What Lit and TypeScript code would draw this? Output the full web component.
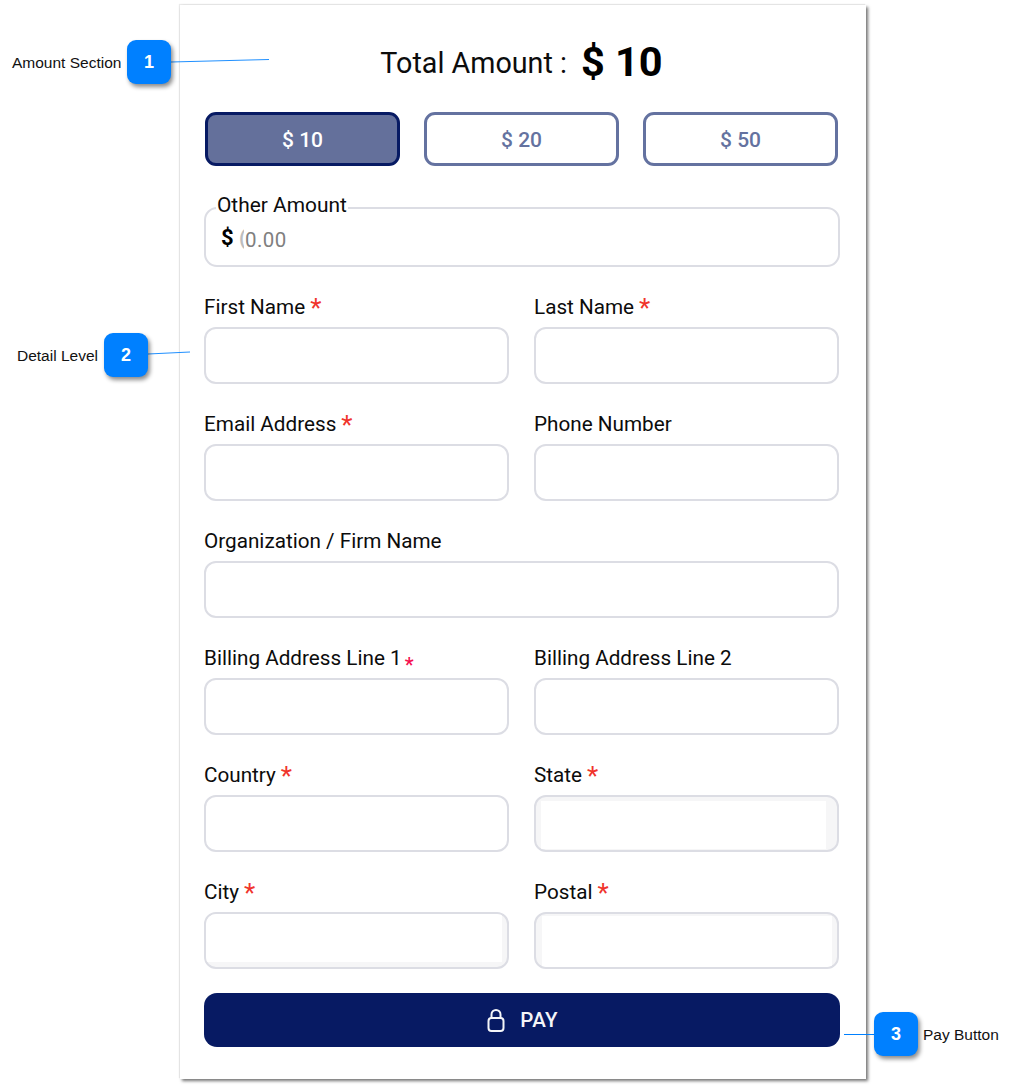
import { LitElement, html, css, svg } from "lit";
import { customElement } from "lit/decorators.js";

type Field = { label: string; star?: "normal" | "small"; inner?: string; span?: boolean };

const rows: Field[] = [
  { label: "First Name", star: "normal" },
  { label: "Last Name", star: "normal" },
  { label: "Email Address", star: "normal" },
  { label: "Phone Number" },
  { label: "Organization / Firm Name", span: true },
  { label: "Billing Address Line 1", star: "small" },
  { label: "Billing Address Line 2" },
  { label: "Country", star: "normal" },
  { label: "State", star: "normal", inner: "state" },
  { label: "City", star: "normal", inner: "city" },
  { label: "Postal", star: "normal", inner: "postal" },
];

@customElement("app-root")
export class AppRoot extends LitElement {
  static styles = css`
    :host {
      display: block;
      position: relative;
      width: 1014px;
      height: 1088px;
      overflow: hidden;
      background: #fff;
      font-family: Roboto, "Liberation Sans", sans-serif;
      color: #0c0c0c;
    }
    .card {
      box-sizing: border-box;
      width: 686px;
      height: 1074px;
      margin-left: 180px;
      position: relative;
      top: 5px;
      padding: 0 27px 0 24px;
      background: #fff;
      box-shadow: 2px 2px 3px rgba(0, 0, 0, 0.55), -1px -1px 1px rgba(0, 0, 0, 0.08);
    }
    .total {
      box-sizing: border-box;
      height: 107px;
      display: flex;
      align-items: center;
      justify-content: center;
      gap: 14px;
      font-size: 28.7px;
      padding: 8px 0 0 0;
    }
    .total b {
      font-size: 41.5px;
      font-weight: 700;
      color: #000;
      position: relative;
      top: -1px;
    }
    .amounts {
      display: flex;
      gap: 24px;
      padding-left: 1px;
    }
    .amount {
      box-sizing: border-box;
      width: 195px;
      height: 54px;
      border: 3px solid #6472a0;
      border-radius: 11px;
      display: flex;
      align-items: center;
      justify-content: center;
      padding-top: 2px;
      font-size: 21px;
      font-weight: 500;
      color: #6472a0;
      background: #fff;
    }
    .amount.on {
      background: #64709b;
      border-color: #071a63;
      color: #fff;
    }
    .other {
      box-sizing: border-box;
      position: relative;
      width: 636px;
      height: 60px;
      margin-top: 41px;
      border: 2px solid #dcdde4;
      border-radius: 13px;
      display: flex;
      align-items: center;
      padding: 0 0 0 16px;
      font-size: 20px;
    }
    .legend {
      position: absolute;
      left: 10px;
      top: -16px;
      padding: 0 1px;
      background: #fff;
      font-size: 20.9px;
      line-height: 24px;
      color: #0c0c0c;
    }
    .dollar {
      font-weight: 700;
      color: #000;
      width: 17px;
      position: relative;
      left: -1px;
      font-size: 22px;
    }
    .paren {
      width: 5px;
      overflow: hidden;
      color: #bdbdbd;
      font-size: 20px;
      font-weight: 700;
      position: relative;
      top: 1px;
    }
    .ph {
      color: #808080;
      font-size: 20.5px;
      letter-spacing: 0.4px;
      position: relative;
      top: 3px;
      left: 1px;
    }
    .grid {
      display: grid;
      grid-template-columns: 305px 305px;
      column-gap: 25px;
      row-gap: 25px;
      margin-top: 25px;
      width: 635px;
    }
    .field.span {
      grid-column: 1 / 3;
    }
    .label {
      box-sizing: border-box;
      height: 35px;
      padding-top: 1px;
      font-size: 20.7px;
      line-height: 28px;
      white-space: nowrap;
      display: flex;
    }
    .star {
      color: #f0342c;
      font-size: 26px;
      margin-left: 5px;
      line-height: 30px;
    }
    .star.small {
      color: #f5104f;
      font-size: 20px;
      margin-left: 3px;
      line-height: 42px;
      font-weight: 500;
    }
    .input {
      box-sizing: border-box;
      height: 57px;
      border: 2px solid #dcdde4;
      border-radius: 12px;
      background: #fff;
      display: flex;
      overflow: hidden;
    }
    .input.filled {
      background: #f6f6f7;
    }
    .inner {
      flex: 1;
      background: #fff;
    }
    .inner.state {
      margin: 4px 11px 1px 5px;
    }
    .inner.city {
      margin: 0 5px 5px 0;
    }
    .inner.postal {
      margin: 2px 5px 0 6px;
    }
    .pay {
      box-sizing: border-box;
      width: 636px;
      height: 54px;
      margin-top: 24px;
      padding-left: 1px;
      border-radius: 13px;
      background: #071a63;
      color: #f4f5f8;
      display: flex;
      align-items: center;
      justify-content: center;
      gap: 15px;
      font-size: 20.5px;
      font-weight: 500;
      letter-spacing: 0.3px;
    }
    .pay svg {
      display: block;
    }
    .links {
      position: absolute;
      inset: 0;
      width: 1014px;
      height: 1088px;
      pointer-events: none;
    }
    .badge {
      box-sizing: border-box;
      position: absolute;
      width: 44px;
      height: 44px;
      padding-top: 1px;
      border-radius: 9px;
      background: #0080ff;
      color: #fff;
      display: flex;
      align-items: center;
      justify-content: center;
      font: 700 18px "Liberation Sans", sans-serif;
      box-shadow: 2px 3px 4px rgba(0, 0, 0, 0.45);
    }
    .note {
      position: absolute;
      font: 15.5px/18px "Liberation Sans", Arial, sans-serif;
      color: #111;
      white-space: nowrap;
    }
  `;

  private renderField(f: Field) {
    return html`<div class="field ${f.span ? "span" : ""}">
      <div class="label">
        ${f.label}${f.star ? html`<span class="star ${f.star === "small" ? "small" : ""}">*</span>` : ""}
      </div>
      <div class="input ${f.inner ? "filled" : ""}">
        ${f.inner ? html`<div class="inner ${f.inner}"></div>` : ""}
      </div>
    </div>`;
  }

  render() {
    return html`
      <div class="card">
        <div class="total"><span>Total Amount :</span><b>$ 10</b></div>
        <div class="amounts">
          <div class="amount on">$ 10</div>
          <div class="amount">$ 20</div>
          <div class="amount">$ 50</div>
        </div>
        <div class="other">
          <span class="legend">Other Amount</span>
          <span class="dollar">$</span>
          <span class="paren">(</span>
          <span class="ph">0.00</span>
        </div>
        <div class="grid">${rows.map((f) => this.renderField(f))}</div>
        <div class="pay">
          <svg width="18" height="23" viewBox="0 0 18 23" fill="none" stroke="#f4f5f8" stroke-width="2">
            <rect x="1.5" y="9" width="15" height="13" rx="3"></rect>
            <path d="M4.5 9V5.5a4.5 4.5 0 0 1 9 0V9"></path>
          </svg>
          <span>PAY</span>
        </div>
      </div>
      <svg class="links" viewBox="0 0 1014 1088">
        ${svg`
          <path d="M171 62 L269 59.5" stroke="#2090ff" stroke-width="1" fill="none"></path>
          <path d="M148 354 L190 352" stroke="#2090ff" stroke-width="1" fill="none"></path>
          <path d="M844 1034.5 L874 1034.5" stroke="#0080ff" stroke-width="1" fill="none"></path>
        `}
      </svg>
      <div class="badge" style="left:127px;top:40px">1</div>
      <div class="note" style="left:12px;top:54px">Amount Section</div>
      <div class="badge" style="left:104px;top:333px">2</div>
      <div class="note" style="left:17px;top:347px">Detail Level</div>
      <div class="badge" style="left:874px;top:1012px">3</div>
      <div class="note" style="left:923px;top:1026px">Pay Button</div>
    `;
  }
}
